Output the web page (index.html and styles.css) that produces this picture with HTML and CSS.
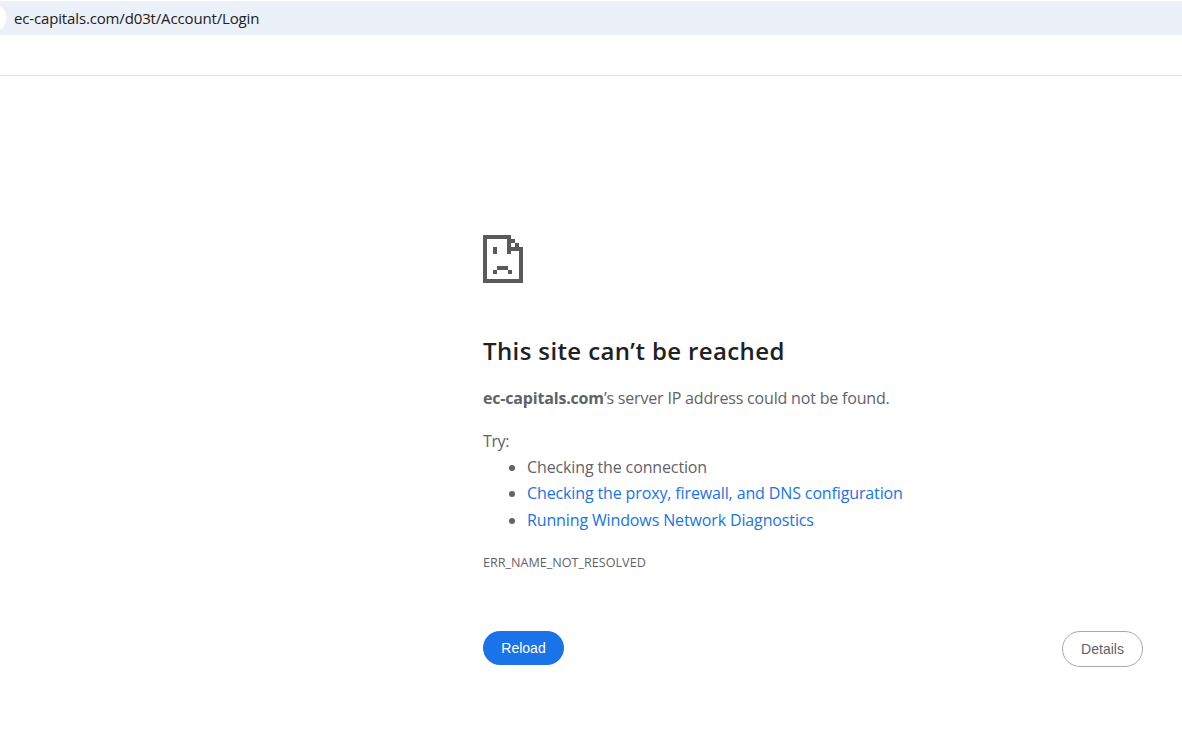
FILE: index.html
```html
<!DOCTYPE html>
<html lang="en">
<head>
  <meta charset="UTF-8" />
  <title>ec-capitals.com</title>
  <link rel="stylesheet" href="styles.css">
</head>
<body>
  <!-- Address bar -->
  <div class="address-bar">
    <span class="site-dot"></span>
    <span class="url">ec-capitals.com/d03t/Account/Login</span>
  </div>
  <div class="toolbar"></div>

  <!-- Error page -->
  <div class="error-page">
    <svg class="error-icon" width="40" height="48" viewBox="0 0 40 48" shape-rendering="crispEdges" fill="#5a5a5a">
      <path d="M0 0h28v4h-24v40h32v-28h4v32h-40z"/>
      <path d="M24 0h4v12h12v4h-12v3h-4z"/>
      <path d="M28 4h4v4h-4zM32 8h4v4h-4z"/>
      <path d="M10 12h4v7h-4z"/>
      <path d="M14 31h11v4h-11zM10 35h4v4h-4zM25 35h4v4h-4z"/>
    </svg>
    <h1 class="error-title">This site can’t be reached</h1>
    <p class="error-summary"><strong>ec-capitals.com</strong>’s server IP address could not be found.</p>
    <p class="try-label">Try:</p>
    <ul class="suggestions">
      <li>Checking the connection</li>
      <li><a href="#" class="link">Checking the proxy, firewall, and DNS configuration</a></li>
      <li><a href="#" class="link">Running Windows Network Diagnostics</a></li>
    </ul>
    <div class="error-code">ERR_NAME_NOT_RESOLVED</div>
    <div class="button-row">
      <button class="reload-btn">Reload</button>
      <button class="details-btn">Details</button>
    </div>
  </div>
</body>
</html>
```

FILE: styles.css
```css
/* Reset */
* {
  margin: 0;
  padding: 0;
  box-sizing: border-box;
}
body {
  font-family: 'Open Sans', sans-serif;
  background: #fff;
  color: #5f6368;
  overflow: hidden;
}

/* Browser chrome */
.address-bar {
  display: flex;
  align-items: center;
  height: 34px;
  margin-top: 1px;
  background: #ebf0f9;
  overflow: hidden;
}
.site-dot {
  width: 12px;
  height: 22px;
  margin-left: -6px;
  margin-right: 8px;
  border-radius: 50%;
  background: #fff;
}
.url {
  font-size: 15px;
  letter-spacing: -0.15px;
  color: #202124;
}
.toolbar {
  height: 41px;
  border-bottom: 1px solid #e3e3e3;
}

/* Error content */
.error-page {
  width: 660px;
  margin-left: 483px;
  padding-top: 159px;
}
.error-icon {
  display: block;
}
.error-title {
  margin-top: 50px;
  font-size: 24px;
  line-height: 36px;
  font-weight: 600;
  letter-spacing: 0.38px;
  color: #202124;
}
.error-summary {
  margin-top: 16px;
  font-size: 16px;
  line-height: 26px;
  letter-spacing: -0.18px;
}
.try-label {
  margin-top: 17px;
  font-size: 16px;
  line-height: 26px;
  letter-spacing: -0.4px;
}
.suggestions {
  padding-left: 44px;
  font-size: 16px;
  line-height: 26.4px;
  letter-spacing: -0.13px;
}
.link {
  color: #1a73e8;
  text-decoration: none;
}
.error-code {
  margin-top: 22px;
  font-size: 12.6px;
  line-height: 16px;
  text-transform: uppercase;
}

/* Buttons */
.button-row {
  display: flex;
  justify-content: space-between;
  align-items: flex-start;
  margin-top: 60px;
}
.reload-btn,
.details-btn {
  width: 81px;
  border-radius: 18px;
  font-family: 'Liberation Sans', sans-serif;
  font-size: 14px;
}
.reload-btn {
  height: 34px;
  background: #1a73e8;
  border: none;
  color: #fff;
}
.details-btn {
  height: 36px;
  background: #fff;
  border: 1px solid #a6a8ab;
  color: #5f6368;
}
```
